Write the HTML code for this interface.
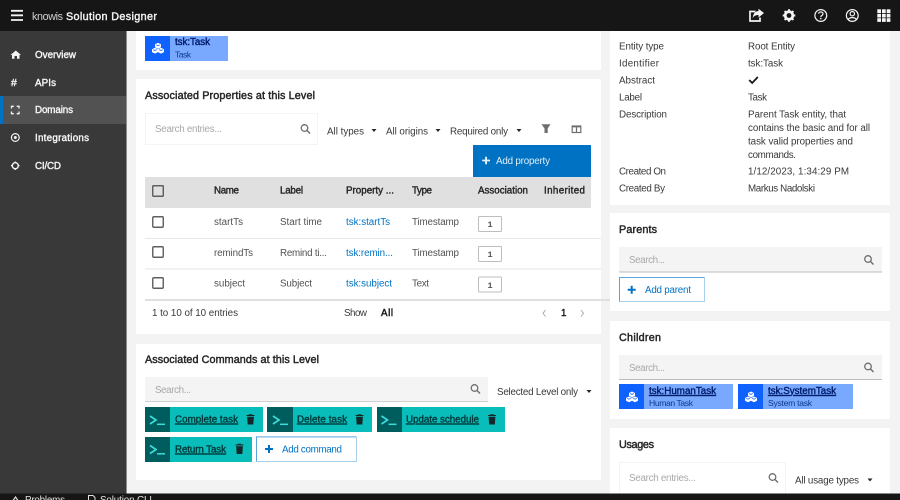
<!DOCTYPE html>
<html lang="en"><head><meta charset="utf-8"><title>knowis Solution Designer</title>
<style>
html,body{margin:0;padding:0;width:900px;height:500px;overflow:hidden;background:#f3f3f3}
svg{display:block}
text{font-family:"Liberation Sans",sans-serif;font-size:9.8px;fill:#393939}
.b{fill:#262626;stroke:#262626;stroke-width:.4px}
.h{font-size:10.8px;fill:#262626;stroke:#262626;stroke-width:.45px}
.n{fill:#f4f4f4;stroke:#f4f4f4;stroke-width:.4px}
.p{fill:#a8a8a8}
.l{fill:#0072c3}
.d{fill:#525252}
.u{text-decoration:underline;fill:#003a3a;stroke:#003a3a;stroke-width:.4px}
.c{text-decoration:underline;fill:#001d6c;stroke:#001d6c;stroke-width:.4px}
.s{font-size:8.6px;fill:#0f3a8c}
.m{font-family:"Liberation Mono",monospace;font-size:8.5px;font-weight:700;fill:#525252}
</style></head><body>
<svg xmlns="http://www.w3.org/2000/svg" width="900" height="500" viewBox="0 0 900 500">
<defs>
<g id="mag"><circle cx="-1" cy="-1" r="3.300" fill="none" stroke="#6f6f6f" stroke-width="1.300"/><path d="M1.400 1.400L4.500 4.500" stroke="#6f6f6f" stroke-width="1.500"/></g>
<path id="caret" d="M-2.500-1.500H2.500L0 1.500Z" fill="#262626"/>
<path id="plus" d="M-1-4H1V-1H4V1H1V4H-1V1H-4V-1H-1Z" fill="#0072c3"/>
<rect id="cb" x="0.750" y="0.750" width="10.500" height="10.500" rx="1" fill="#fff" stroke="#5f5f5f" stroke-width="1.400"/>
<path id="trash" d="M-4-3.500H4V-4.500H1.800V-5.300H-1.800V-4.500H-4ZM-3.400-2.700H3.400L2.800 5H-2.800Z" fill="#12282a"/>
<g id="cmd"><path d="M-7-4L-1 0L-7 4" fill="none" stroke="#3ddbd9" stroke-width="1.700"/><path d="M0 4.300H8" stroke="#3ddbd9" stroke-width="1.500"/></g>
<g id="cube" fill="#fff"><path d="M0-5L3-3.500V-.6L0 .9L-3-.6V-3.500Z"/><path d="M-3 0L0 1.500V4.300L-3 5.800L-6 4.300V1.500Z"/><path d="M3 0L6 1.500V4.300L3 5.800L0 4.300V1.500Z"/><path d="M-1.800-3L0-2.100L1.800-3M-4.800 1.800L-3 2.700L-1.200 1.800M1.200 1.800L3 2.700L4.800 1.800" fill="none" stroke="#0f62fe" stroke-width=".8"/></g>
<rect id="num" x="0.500" y="0.500" width="23" height="15" rx="1" fill="#fff" stroke="#bdbdbd"/>
</defs>

<rect width="900" height="500" fill="#f3f3f3"/>

<!-- panels -->
<g fill="#fff">
<rect x="136" y="31" width="465" height="39"/>
<rect x="136" y="79" width="465" height="255"/>
<rect x="136" y="344" width="465" height="136"/>
<rect x="610" y="31" width="280" height="174"/>
<rect x="610" y="213" width="280" height="98"/>
<rect x="610" y="321" width="280" height="98"/>
<rect x="610" y="428" width="280" height="70"/>
</g>

<!-- task chip -->
<rect x="145" y="36" width="83" height="25" fill="#78a9ff"/>
<rect x="145" y="36" width="25" height="25" fill="#0f62fe"/>
<use href="#cube" x="158" y="47.800"/>
<text x="175" y="45" class="b" textLength="35" style="fill:#001d6c;stroke:#001d6c">tsk:Task</text>
<text x="175" y="57.300" class="s" textLength="16">Task</text>

<!-- properties -->
<text x="145" y="99" class="h" textLength="170">Associated Properties at this Level</text>
<rect x="145.500" y="113.500" width="172" height="31" fill="#fff" stroke="#f4f4f4"/>
<text x="155" y="132" class="p" textLength="67">Search entries...</text>
<use href="#mag" x="305.500" y="129"/>
<text x="327" y="134.500" textLength="37">All types</text><use href="#caret" x="374" y="130.500"/>
<text x="386" y="134.500" textLength="42">All origins</text><use href="#caret" x="438" y="130.500"/>
<text x="450" y="134.500" textLength="58">Required only</text><use href="#caret" x="519" y="130.500"/>
<path d="M541.500 124.200H550.500L547.700 128.500V133H544.500V128.500Z" fill="#6f6f6f"/>
<rect x="572.200" y="126" width="8.600" height="6.500" fill="none" stroke="#6f6f6f" stroke-width="1.200"/><path d="M572 126.800H581M576.500 126V132.500" stroke="#6f6f6f" stroke-width="1.200"/>
<rect x="473" y="145" width="118" height="32" fill="#0072c3"/>
<path d="M485.100 156.700H487V159.600H490V161.400H487V164.300H485.100V161.400H482.200V159.600H485.100Z" fill="#e5f0f8"/>
<text x="496" y="164" textLength="54" style="fill:#e0edf7">Add property</text>

<rect x="145" y="177" width="446" height="31" fill="#e0e0e0"/>
<use href="#cb" x="152" y="185" style="fill:#e0e0e0"/>
<rect x="152.750" y="185.750" width="10.500" height="10.500" rx="1" fill="#e0e0e0" stroke="#5f5f5f" stroke-width="1.400"/>
<text x="214" y="193.500" class="b" textLength="25">Name</text>
<text x="280" y="193.500" class="b" textLength="23">Label</text>
<text x="346" y="193.500" class="b" textLength="48">Property ...</text>
<text x="412" y="193.500" class="b" textLength="20">Type</text>
<text x="478" y="193.500" class="b" textLength="50">Association</text>
<text x="544" y="193.500" class="b" textLength="41">Inherited</text>
<use href="#cb" x="152" y="216"/><use href="#cb" x="152" y="246"/><use href="#cb" x="152" y="277"/>
<text x="214" y="225" class="d" textLength="29">startTs</text>
<text x="280" y="225" class="d" textLength="42">Start time</text>
<text x="346" y="225" class="l" textLength="44">tsk:startTs</text>
<text x="412" y="225" class="d" textLength="47">Timestamp</text>
<use href="#num" x="478" y="216"/><text x="487.500" y="227" class="m">1</text>
<rect x="145" y="238" width="456" height="1" fill="#e8e8e8"/>
<text x="214" y="256" class="d" textLength="39">remindTs</text>
<text x="280" y="256" class="d" textLength="47">Remind ti...</text>
<text x="346" y="256" class="l" textLength="47">tsk:remin...</text>
<text x="412" y="256" class="d" textLength="47">Timestamp</text>
<use href="#num" x="478" y="246"/><text x="487.500" y="257" class="m">1</text>
<rect x="145" y="268" width="456" height="2" fill="#f2f2f2"/>
<text x="214" y="286.500" class="d" textLength="31">subject</text>
<text x="280" y="286.500" class="d" textLength="32">Subject</text>
<text x="346" y="286.500" class="l" textLength="46">tsk:subject</text>
<text x="412" y="286.500" class="d" textLength="17">Text</text>
<use href="#num" x="478" y="276.500"/><text x="487.500" y="288" class="m">1</text>
<rect x="145" y="299" width="465" height="2" fill="#e0e0e0"/>
<text x="152" y="316" textLength="86">1 to 10 of 10 entries</text>
<text x="344" y="316" textLength="23">Show</text>
<text x="381" y="316" class="b" textLength="12" style="fill:#161616;stroke:#161616">All</text>
<path d="M545.500 310L543 313.300L545.500 316.600" fill="none" stroke="#a8a8a8" stroke-width=".9"/>
<text x="561" y="316" class="b" style="fill:#161616;stroke:#161616">1</text>
<path d="M581 310L583.500 313.300L581 316.600" fill="none" stroke="#a8a8a8" stroke-width=".9"/>

<!-- commands -->
<text x="145" y="363" class="h" textLength="174">Associated Commands at this Level</text>
<rect x="145" y="377" width="343" height="25" fill="#f4f4f4"/><rect x="145" y="401" width="343" height="1" fill="#d0d0d0"/>
<text x="155" y="393" class="p" textLength="36">Search...</text>
<use href="#mag" x="475.500" y="389"/>
<text x="497" y="395" textLength="81">Selected Level only</text><use href="#caret" x="589" y="391.500"/>

<g fill="#08bdba">
<rect x="145" y="407" width="118" height="25"/><rect x="267" y="407" width="105" height="25"/><rect x="377" y="407" width="128" height="25"/><rect x="145" y="437" width="107" height="25"/>
</g>
<g fill="#005d5d">
<rect x="145" y="407" width="25" height="25"/><rect x="267" y="407" width="26" height="25"/><rect x="377" y="407" width="25" height="25"/><rect x="145" y="437" width="25" height="25"/>
</g>
<use href="#cmd" x="157" y="420"/><use href="#cmd" x="280" y="420"/><use href="#cmd" x="388.500" y="420"/><use href="#cmd" x="157" y="449.500"/>
<text x="175" y="422.500" class="u" textLength="63">Complete task</text><use href="#trash" x="250.500" y="419.500"/>
<text x="297" y="422.500" class="u" textLength="50">Delete task</text><use href="#trash" x="359.500" y="419.500"/>
<text x="406" y="422.500" class="u" textLength="73">Update schedule</text><use href="#trash" x="492" y="419.500"/>
<text x="175" y="452.500" class="u" textLength="51">Return Task</text><use href="#trash" x="239.500" y="449"/>
<path d="M256.500 461.500H356.500V437" fill="#fff" stroke="#a6d0ee"/>
<rect x="257" y="437" width="99" height="24" fill="#fff"/>
<path d="M256.500 461.500V436.900H356.500" fill="none" stroke="#5aa5de"/>
<use href="#plus" x="269" y="449"/>
<text x="282" y="452.500" class="l" textLength="60">Add command</text>

<!-- details -->
<text x="619" y="49.500" textLength="45">Entity type</text>
<text x="619" y="66.500" textLength="40">Identifier</text>
<text x="619" y="83.500" textLength="36">Abstract</text>
<text x="619" y="100.500" textLength="23">Label</text>
<text x="619" y="117.500" textLength="48">Description</text>
<text x="619" y="174.500" textLength="47">Created On</text>
<text x="619" y="191.500" textLength="46">Created By</text>
<text x="748" y="49.500" textLength="47">Root Entity</text>
<text x="748" y="66.500" textLength="35">tsk:Task</text>
<path d="M749.200 80L752.200 83L757.800 77" fill="none" stroke="#161616" stroke-width="1.800"/>
<text x="748" y="100.500" textLength="19">Task</text>
<text x="748" y="117.500" textLength="98">Parent Task entity, that</text>
<text x="748" y="131" textLength="122">contains the basic and for all</text>
<text x="748" y="144.500" textLength="105">task valid properties and</text>
<text x="748" y="158" textLength="48">commands.</text>
<text x="748" y="174.500" textLength="101">1/12/2023, 1:34:29 PM</text>
<text x="748" y="191.500" textLength="67">Markus Nadolski</text>

<!-- parents -->
<text x="619" y="233" class="h" textLength="38">Parents</text>
<rect x="619" y="247" width="263" height="25" fill="#f4f4f4"/><rect x="619" y="271.500" width="263" height="1" fill="#bdbdbd"/>
<text x="629" y="263" class="p" textLength="36">Search...</text>
<use href="#mag" x="869" y="260"/>
<path d="M704.500 277.500V301.500H619.500" fill="none" stroke="#a6d0ee"/>
<rect x="620" y="278" width="84" height="23" fill="#fff"/>
<path d="M619.500 301.500V277.500H704.500" fill="none" stroke="#5aa5de"/>
<use href="#plus" x="631.700" y="289.700"/>
<text x="645" y="293" class="l" textLength="46">Add parent</text>

<!-- children -->
<text x="619" y="341" class="h" textLength="42">Children</text>
<rect x="619" y="355" width="263" height="25" fill="#f4f4f4"/><rect x="619" y="379" width="263" height="1" fill="#bdbdbd"/>
<text x="629" y="371" class="p" textLength="36">Search...</text>
<use href="#mag" x="869" y="367.500"/>
<rect x="619" y="384" width="114" height="25" fill="#78a9ff"/><rect x="619" y="384" width="25" height="25" fill="#0f62fe"/>
<rect x="738" y="384" width="115" height="25" fill="#78a9ff"/><rect x="738" y="384" width="25" height="25" fill="#0f62fe"/>
<use href="#cube" x="632" y="396.500"/><use href="#cube" x="751" y="396.500"/>
<text x="649" y="394" class="c" textLength="67">tsk:HumanTask</text>
<text x="649" y="406" class="s" textLength="44">Human Task</text>
<text x="768" y="394" class="c" textLength="68">tsk:SystemTask</text>
<text x="768" y="406" class="s" textLength="44">System task</text>

<!-- usages -->
<text x="619" y="448" class="h" textLength="35">Usages</text>
<rect x="619.500" y="462.500" width="166" height="36" fill="#fff" stroke="#f4f4f4"/>
<text x="629" y="481" class="p" textLength="67">Search entries...</text>
<use href="#mag" x="773.500" y="478"/>
<text x="795" y="483.500" textLength="64">All usage types</text><use href="#caret" x="870" y="480"/>

<!-- sidebar -->
<rect x="0" y="31" width="127" height="463" fill="#393939"/>
<rect x="126" y="31" width="1" height="463" fill="#8d8d8d"/>
<rect x="0" y="96" width="126" height="28" fill="#525252"/>
<rect x="0" y="96" width="3" height="28" fill="#0072c3"/>
<path d="M15.800 50.500L21 55H19.500V58.800H17V56H14.500V58.800H12V55H10.500Z" fill="#f4f4f4"/>
<text x="35" y="58" class="n" textLength="41">Overview</text>
<text x="11" y="86" class="n" style="font-size:10.500px" textLength="8">#</text>
<text x="35" y="86" class="n" textLength="21">APIs</text>
<path d="M11.500 108.500V106.300H13.800M16.700 106.300H19V108.500M19 111.500V113.700H16.700M13.800 113.700H11.500V111.500" fill="none" stroke="#f4f4f4" stroke-width="1.300"/>
<text x="35" y="113" class="n" textLength="38">Domains</text>
<circle cx="15.300" cy="137.500" r="3.900" fill="none" stroke="#f4f4f4" stroke-width="1.200"/><circle cx="15.300" cy="137.500" r="1.500" fill="#f4f4f4"/>
<text x="35" y="141" class="n" textLength="54">Integrations</text>
<circle cx="15.300" cy="165.700" r="3" fill="none" stroke="#f4f4f4" stroke-width="1.400"/><path d="M15.300 161.500V163M15.300 168.500V170M11 165.700H12.500M18 165.700H19.500" stroke="#f4f4f4" stroke-width="1.300"/>
<text x="35" y="169" class="n" textLength="26">CI/CD</text>

<!-- bottom bar -->
<rect x="0" y="493.500" width="900" height="6.500" fill="#161616"/>
<path d="M15.500 497L19 502H12Z" fill="none" stroke="#e0e0e0" stroke-width="1.200"/>
<text x="25" y="503" textLength="40" style="fill:#e0e0e0">Problems</text>
<path d="M88.500 500V495.500H93L95 497.500V500" fill="none" stroke="#e0e0e0"/>
<text x="100" y="503" textLength="52" style="fill:#e0e0e0">Solution CLI</text>

<!-- header -->
<rect width="900" height="31" fill="#161616"/>
<path d="M11 10.800H23M11 15.300H23M11 20H23" stroke="#f4f4f4" stroke-width="1.800"/>
<text x="32" y="20" textLength="31" style="font-size:10.800px;fill:#d0d0d0">knowis</text>
<text x="66" y="20" textLength="91" style="font-size:10.800px;fill:#f4f4f4;stroke:#f4f4f4;stroke-width:.4px">Solution Designer</text>
<!-- share -->
<path d="M755.500 11.500H750V21H760V17.500" fill="none" stroke="#f4f4f4" stroke-width="1.700"/>
<path d="M758.500 8.800L764 13L758.500 17.500V15C755.500 15 753.500 16 752.800 18.500C752.800 14 755 11.300 758.500 11Z" fill="#f4f4f4"/>
<!-- gear -->
<circle cx="789" cy="15.500" r="3.800" fill="none" stroke="#f4f4f4" stroke-width="2.800"/>
<path d="M789 9.200V21.800M782.700 15.500H795.300M784.600 11.100L793.400 19.900M793.400 11.100L784.600 19.900" stroke="#f4f4f4" stroke-width="2" stroke-dasharray="2.200 8.200"/>
<!-- help -->
<circle cx="820.800" cy="15.500" r="5.900" fill="none" stroke="#f4f4f4" stroke-width="1.200"/>
<path d="M818.700 13.800C818.700 11.300 823 11.300 823 13.800C823 15.300 820.800 15.400 820.800 17" fill="none" stroke="#f4f4f4" stroke-width="1.200"/><circle cx="820.800" cy="18.600" r=".8" fill="#f4f4f4"/>
<!-- user -->
<circle cx="852.300" cy="15.500" r="5.900" fill="none" stroke="#f4f4f4" stroke-width="1.200"/>
<circle cx="852.300" cy="13.700" r="2.200" fill="none" stroke="#f4f4f4" stroke-width="1.200"/>
<path d="M848.300 19.500C849.300 17 855.300 17 856.300 19.500" fill="none" stroke="#f4f4f4" stroke-width="1.200"/>
<!-- grid -->
<g fill="#f4f4f4">
<rect x="877.300" y="9.300" width="3.700" height="3.700"/><rect x="882" y="9.300" width="3.700" height="3.700"/><rect x="886.700" y="9.300" width="3.700" height="3.700"/>
<rect x="877.300" y="13.800" width="3.700" height="3.700"/><rect x="882" y="13.800" width="3.700" height="3.700"/><rect x="886.700" y="13.800" width="3.700" height="3.700"/>
<rect x="877.300" y="18.200" width="3.700" height="3.700"/><rect x="882" y="18.200" width="3.700" height="3.700"/><rect x="886.700" y="18.200" width="3.700" height="3.700"/>
</g>
</svg>
</body></html>
